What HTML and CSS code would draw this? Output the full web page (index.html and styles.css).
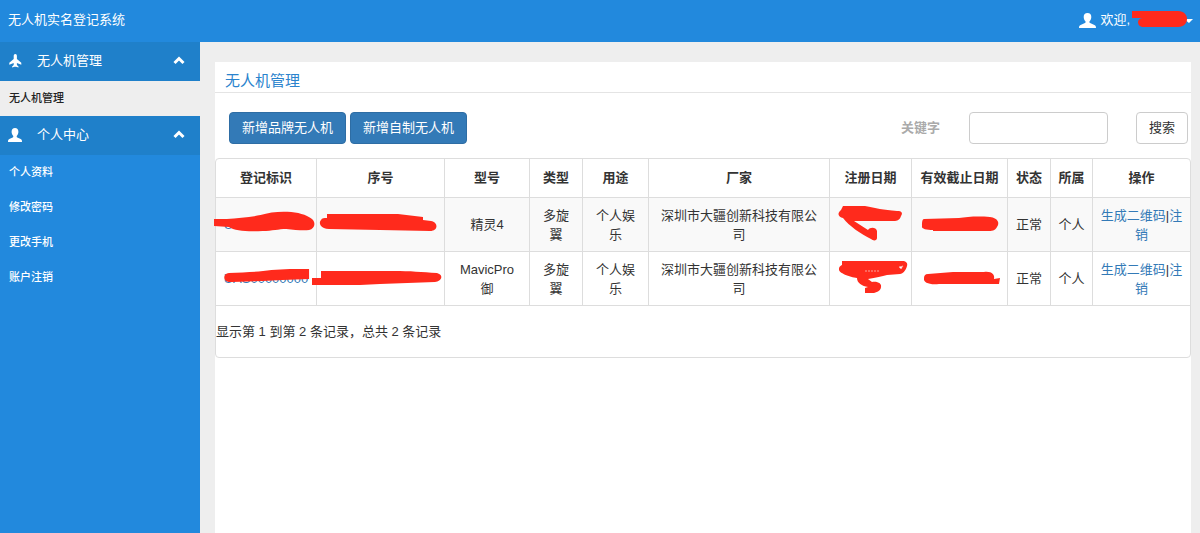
FILE: index.html
```html
<!DOCTYPE html>
<html lang="zh-CN">
<head>
<meta charset="utf-8">
<meta name="viewport" content="width=device-width, initial-scale=1">
<title>无人机实名登记系统</title>
<link rel="stylesheet" href="styles.css">
</head>
<body>
<header class="topbar">
  <div class="brand">无人机实名登记系统</div>
  <button class="user" type="button">
    <svg class="user-icon" viewBox="0 0 17 15" aria-hidden="true"><path d="M8.500 0C11 0 12.300 1.500 12.300 4c0 2-.8 3.200-1.700 4.200-.4.6-.2 1.500.5 1.900l4.300 1.800c1.200.5 1.600 1.200 1.600 3.100H0c0-1.900.4-2.600 1.600-3.100l4.300-1.800c.7-.4.9-1.300.5-1.900C5.500 7.200 4.700 6 4.700 4 4.700 1.500 6 0 8.500 0Z"/></svg>
    <span>欢迎,</span>
    <svg class="user-mark" viewBox="1132 10 61 18" aria-hidden="true"><path class="caret" d="M1184 19h9l-4 4Z"/><path class="ink" d="M1132 11h46c6 0 9 4 9 8s-3 8-9 8h-34c-4 0-6-2-6-5 0-2 2-4 5-4h-11Z"/></svg>
  </button>
</header>
<div class="layout">
  <nav class="sidebar">
    <button class="group" type="button">
      <svg class="group-icon" viewBox="0 0 14 14" aria-hidden="true"><path d="M7.300 0C8.300 0 8.900.8 8.900 2v3l4.400 3.700v2L8.900 8.900v2l1.600 1.500v1.200l-2.500-.8h-1.400l-2.500.8v-1.200l1.600-1.500v-2L1.300 10.700v-2L5.700 5V2C5.700.8 6.300 0 7.300 0Z"/></svg>
      <span>无人机管理</span>
      <svg class="chevron" viewBox="0 0 12 9" aria-hidden="true"><path d="m1.500 7 4.500-4.500L10.500 7"/></svg>
    </button>
    <a class="item current" href="#drones">无人机管理</a>
    <button class="group" type="button">
      <svg class="group-icon" viewBox="0 0 14 14" aria-hidden="true"><path d="M7 0c2.200 0 3.400 1.400 3.400 3.700 0 1.900-.7 3-1.500 4-.4.600-.2 1.400.4 1.700l3.400 1.500c1 .5 1.300 1.100 1.300 3.100H0c0-2 .3-2.600 1.300-3.100l3.400-1.500c.6-.3.8-1.100.4-1.700-.8-1-1.500-2.100-1.500-4C3.600 1.400 4.800 0 7 0Z"/></svg>
      <span>个人中心</span>
      <svg class="chevron" viewBox="0 0 12 9" aria-hidden="true"><path d="m1.500 7 4.500-4.500L10.500 7"/></svg>
    </button>
    <a class="item" href="#profile">个人资料</a>
    <a class="item" href="#password">修改密码</a>
    <a class="item" href="#phone">更改手机</a>
    <a class="item" href="#cancel">账户注销</a>
  </nav>
  <main class="panel">
    <h1 class="title">无人机管理</h1>
    <form class="toolbar">
      <button class="btn primary" type="button">新增品牌无人机</button>
      <button class="btn primary" type="button">新增自制无人机</button>
      <label class="keyword" for="keyword">关键字</label>
      <input class="field" id="keyword" type="text">
      <button class="btn search" type="button">搜索</button>
    </form>
    <section class="records">
      <table class="grid">
        <colgroup>
          <col class="c-id"><col class="c-serial"><col class="c-model"><col class="c-type"><col class="c-use"><col class="c-maker"><col class="c-date"><col class="c-expiry"><col class="c-state"><col class="c-owner"><col class="c-action">
        </colgroup>
        <thead>
          <tr><th>登记标识</th><th>序号</th><th>型号</th><th>类型</th><th>用途</th><th>厂家</th><th>注册日期</th><th>有效截止日期</th><th>状态</th><th>所属</th><th>操作</th></tr>
        </thead>
        <tbody>
          <tr>
            <td><a href="#r1">UAS00000000</a><svg class="mark" viewBox="216 198 101 53" aria-hidden="true"><path class="ink" d="M214 219h13c11-1 24-2 34-4 9-3 21-4 31-3 10 1 18 4 22 8 3 4 1 9-4 10-5 1-14 0-23-1-8 0-14 2-24 2-14 1-28 0-34-4l-15-1Z"/></svg></td>
            <td><svg class="mark" viewBox="317 198 127 53" aria-hidden="true"><path class="ink" d="M327 214h71l25 3v3l8 1c7 1 8 10-1 10l-50-1-51-1c-8 0-11-6-8-9 1-2 3-2 6-2Z"/></svg></td>
            <td class="model">精灵4</td><td>多旋翼</td><td>个人娱乐</td><td>深圳市大疆创新科技有限公司</td>
            <td><svg class="mark" viewBox="829 198 81 53" aria-hidden="true"><path class="ink" d="M842 206h22c11 2 18 4 32 5 5 0 6 2 4 5-1 4-4 5-7 5h-40l14 9c2-3 8-3 9 1v7c0 3-4 3-6 1-10-5-22-13-28-21-5-1-6-5-2-8Z"/></svg></td>
            <td><svg class="mark" viewBox="911 198 95 53" aria-hidden="true"><path class="ink" d="M923 219l35-1c8-1 17-2 31-1 8 1 10 6 7 10-2 4-5 4-10 4h-54v-1c-6 0-12-1-11-4 0-3 0-7 2-7Z"/></svg></td>
            <td>正常</td><td>个人</td><td><a href="#qr1">生成二维码</a>|<a href="#del1">注销</a></td>
          </tr>
          <tr>
            <td><a href="#r2">UAS00000000</a><svg class="mark" viewBox="216 252 101 53" aria-hidden="true"><path class="ink" d="M229 273c16-1 31-1 43-3 12-1 25-1 38-1v10l-27 1-20 1-31 1c-9 1-10-8-3-9Z"/></svg></td>
            <td><svg class="mark" viewBox="317 252 127 53" aria-hidden="true"><path class="ink" d="M321 271h73c16 0 28 1 43 2 7 2 5 8-2 9l-55 2-20 1h-48v-7h9Z"/></svg></td>
            <td class="model">MavicPro御</td><td>多旋翼</td><td>个人娱乐</td><td>深圳市大疆创新科技有限公司</td>
            <td><svg class="mark" viewBox="829 252 81 53" aria-hidden="true"><path class="ink" d="M841 261h60c4 0 6 2 5 5-1 4-4 8-7 8l-13 1c-5 1-11 3-19 4l4 3c6-1 10 2 9 5 0 3-3 5-7 6h-9v-5l3-1c-6-1-11-4-11-9-7-1-19-5-18-9 0-3 3-4 3-4Z"/><path class="gap" d="M898 267l4-1-2 3ZM864 271h14"/></svg></td>
            <td><svg class="mark" viewBox="911 252 95 53" aria-hidden="true"><path class="ink" d="M927 274l25-2h31c8-1 11 3 10 7l6-1-1 6h-60c-9 1-16-1-15-6 0-2 1-4 4-4Z"/></svg></td>
            <td>正常</td><td>个人</td><td><a href="#qr2">生成二维码</a>|<a href="#del2">注销</a></td>
          </tr>
        </tbody>
      </table>
      <p class="summary">显示第 1 到第 2 条记录，总共 2 条记录</p>
    </section>
  </main>
</div>
</body>
</html>
```

FILE: styles.css
```css
* { box-sizing: border-box; }
body {
  margin: 0;
  min-height: 100vh;
  display: flex;
  flex-direction: column;
  background: #eee;
  color: #333;
  font: 13px/19px "Liberation Sans", "Noto Sans CJK SC", sans-serif;
}
button, input { font: inherit; }
button { cursor: pointer; }
a { color: #337ab7; text-decoration: none; }

.topbar {
  height: 42px;
  padding: 0 7px 4px 8px;
  display: flex;
  align-items: center;
  justify-content: space-between;
  background: #2289dd;
  color: #fff;
}
.user {
  display: flex;
  align-items: center;
  padding: 0;
  border: 0;
  background: none;
  color: inherit;
}
.user-icon { width: 17px; height: 15px; margin: 2px 4px 0 0; fill: #fff; }
.user-mark { width: 61px; height: 18px; margin-left: 2px; }
.ink { fill: #ff2a1c; }
.caret { fill: #fff; }
.gap { fill: #fff; stroke: #f9a49d; stroke-width: 1; stroke-dasharray: 2 1; }

.layout { flex: 1; display: flex; }
.sidebar {
  width: 200px;
  flex: none;
  display: flex;
  flex-direction: column;
  background: #2289dd;
}
.group {
  height: 39px;
  padding: 0 15px 2px 8px;
  display: flex;
  align-items: center;
  border: 0;
  background: #1f80ca;
  color: #fff;
  text-align: left;
}
.group span { flex: 1; }
.group-icon { width: 14px; height: 14px; margin-right: 15px; fill: #fff; }
.chevron { width: 12px; height: 9px; fill: none; stroke: #fff; stroke-width: 3; }
.item {
  height: 35px;
  padding: 0 9px;
  display: flex;
  align-items: center;
  color: #fff;
  font-size: 11px;
  font-weight: 500;
}
.item.current { background: #eee; color: #222; }

.panel { flex: 1; min-width: 0; margin: 20px 9px 0 15px; background: #fff; }
.title {
  height: 31px;
  margin: 0;
  padding: 9px 10px 0;
  border-bottom: 1px solid #e4e4e4;
  color: #2a83cd;
  font-size: 15px;
  font-weight: 400;
  line-height: 20px;
}
.toolbar {
  padding: 19px 3px 14px 14px;
  display: flex;
  align-items: center;
  gap: 4px;
}
.btn {
  height: 32px;
  padding: 0 12px 2px;
  border: 1px solid #ccc;
  border-radius: 4px;
  background: #fff;
  color: #333;
}
.btn.primary { width: 117px; border-color: #2e6da4; background: #337ab7; color: #fff; white-space: nowrap; padding: 0 0 2px; }
.keyword { margin-left: auto; margin-right: 25px; padding-bottom: 2px; color: #aaa; font-weight: 700; }
.field {
  width: 139px;
  height: 32px;
  margin-right: 24px;
  border: 1px solid #ccc;
  border-radius: 4px;
  background: #fff;
}

.records { border: 1px solid #ddd; border-radius: 4px; }
.grid { width: 100%; table-layout: fixed; border-collapse: separate; border-spacing: 0; }
.grid th, .grid td {
  position: relative;
  padding: 0 7px;
  border-right: 1px solid #ddd;
  border-bottom: 1px solid #ddd;
  text-align: center;
  vertical-align: middle;
}
.grid th:last-child, .grid td:last-child { border-right: 0; }
.grid th { height: 39px; padding-bottom: 2px; }
.grid td { height: 54px; }
.grid td.model { padding: 0 12px; }
.grid tbody tr:nth-child(odd) td { background: #f9f9f9; }
.mark { position: absolute; z-index: 1; top: 0; left: 0; width: 100%; height: 100%; overflow: visible; }
.c-id { width: 101px; }
.c-serial { width: 128px; }
.c-model { width: 85px; }
.c-type { width: 53px; }
.c-use { width: 66px; }
.c-maker { width: 181px; }
.c-date { width: 82px; }
.c-expiry { width: 96px; }
.c-state { width: 43px; }
.c-owner { width: 42px; }
.c-action { width: 97px; }
.summary { margin: 0; padding: 16px 0; }
```
